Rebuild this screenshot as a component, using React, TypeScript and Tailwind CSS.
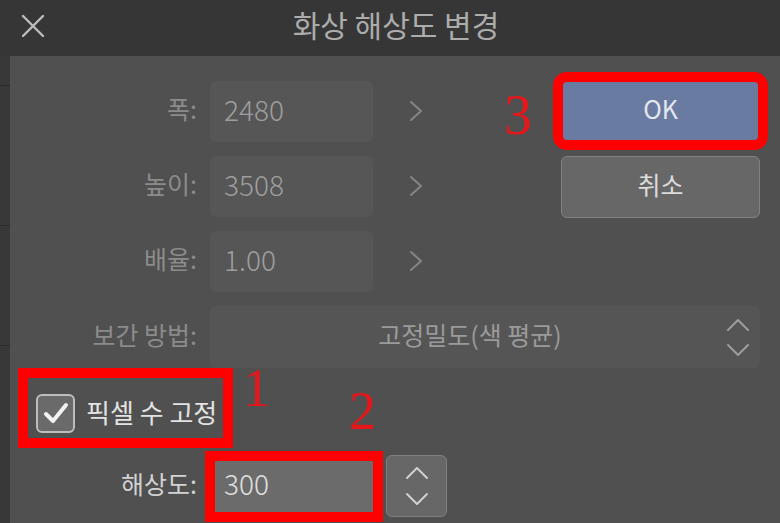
import React from 'react';

const font = { fontFamily: '"Noto Sans CJK KR", "Noto Sans", sans-serif' };
const serif = { fontFamily: '"Liberation Serif", serif' };

function Chevron({ dir, className }: { dir: 'right' | 'up' | 'down'; className?: string }) {
    const d = dir === 'right' ? 'M2 2 L12 11 L2 20' : dir === 'up' ? 'M2 12 L12 2 L22 12' : 'M2 2 L12 12 L22 2';
    const w = dir === 'right' ? 14 : 24;
    const h = dir === 'right' ? 22 : 14;
    return (
        <svg width={w} height={h} viewBox={`0 0 ${w} ${h}`} className={className}>
            <path d={d} fill="none" stroke="currentColor" strokeWidth="2" strokeLinecap="round" strokeLinejoin="round" />
        </svg>
    );
}

function Row({ label, value }: { label: string; value: string }) {
    return (
        <div className="flex items-center h-[61px]">
            <div className="w-[187px] text-right text-[25px] text-[#8b8b8b] pb-[5px]">{label}</div>
            <div className="ml-[13px] w-[163px] h-full rounded-md bg-[#565656] flex items-center pl-[14px] pb-[6px] text-[28px] font-light text-[#9e9e9e]">
                {value}
            </div>
            <div className="w-[86px] flex justify-center text-[#858585] pb-[2px]">
                <Chevron dir="right" />
            </div>
        </div>
    );
}

export default function App() {
    return (
        <div className="w-[780px] h-[523px] bg-[#505050] flex flex-col overflow-hidden relative" style={font}>
            {/* header */}
            <div className="h-[56px] bg-[#363636] flex items-center relative shrink-0">
                <svg width="24" height="24" viewBox="0 0 24 24" className="ml-[21px] mb-[4px] text-[#bdbdbd]">
                    <path d="M2 2 L22 22 M22 2 L2 22" stroke="currentColor" strokeWidth="2.4" strokeLinecap="round" />
                </svg>
                <div className="absolute left-0 right-0 text-center pl-[12px] pb-[8px] text-[30px] text-[#acacac] pointer-events-none">화상 해상도 변경</div>
            </div>

            <div className="flex flex-1">
                {/* left strip */}
                <div className="w-[10px] bg-[#383838] flex flex-col">
                    <div className="h-[30px] border-b border-[#2a2a2a]" />
                    <div className="h-[140px] border-b border-[#2c2c2c]" />
                    <div className="h-[120px] border-b border-[#2c2c2c]" />
                </div>

                {/* main panel */}
                <div className="flex-1 flex flex-col relative">
                    <div className="flex pt-[25px]">
                        <div className="flex flex-col gap-[14px]">
                            <Row label="폭:" value="2480" />
                            <Row label="높이:" value="3508" />
                            <Row label="배율:" value="1.00" />
                        </div>
                        <div className="ml-auto mr-[20px] flex flex-col gap-[14px]">
                            <button className="w-[199px] h-[62px] -mt-[1px] pb-[4px] rounded-md bg-[#6a7ba1] text-[25px] text-[#e3e7ef] outline-[10px] outline-[#ff0000] -outline-offset-2">
                                OK
                            </button>
                            <button className="w-[199px] h-[62px] pb-[4px] rounded-md bg-[#676767] border border-[#818181] text-[25px] text-[#dcdcdc]">
                                취소
                            </button>
                        </div>
                    </div>

                    {/* interpolation */}
                    <div className="flex items-center h-[62px] mt-[14px]">
                        <div className="w-[187px] text-right text-[25px] text-[#8b8b8b] pb-[5px]">보간 방법:</div>
                        <div className="ml-[13px] w-[550px] h-full rounded-md bg-[#555555] flex items-center relative">
                            <div className="flex-1 text-center text-[25px] text-[#9a9a9a] pl-[4px] pb-[5px]">고정밀도(색 평균)</div>
                            <div className="flex flex-col items-center gap-[11px] mr-[10px] text-[#9d9d9d]">
                                <Chevron dir="up" />
                                <Chevron dir="down" />
                            </div>
                        </div>
                    </div>

                    {/* pixel lock */}
                    <div className="flex items-center mt-[10px] ml-[18px] w-[195px] h-[60px] pt-[10px] pl-[8px] outline-[10px] outline-[#ff0000]">
                        <div className="w-[39px] h-[39px] rounded-md border-2 border-[#bdbdbd] bg-[#6a6a6a] flex items-center justify-center">
                            <svg width="28" height="24" viewBox="0 0 28 24">
                                <path d="M4 13 L11 20 L24 4" fill="none" stroke="#f2f2f2" strokeWidth="4" strokeLinecap="round" strokeLinejoin="round" />
                            </svg>
                        </div>
                        <span className="ml-[11px] pb-[4px] text-[26px] text-[#e2e2e2] whitespace-nowrap">픽셀 수 고정</span>
                    </div>

                    {/* resolution */}
                    <div className="flex items-center mt-[17px]">
                        <div className="w-[187px] text-right text-[25px] text-[#d2d2d2] pb-[5px]">해상도:</div>
                        <div className="ml-[18px] w-[158px] h-[51px] bg-[#6b6b6b] flex items-center pl-[9px] pb-[6px] text-[28px] font-light text-[#e0e0e0] outline-[10px] outline-[#ff0000]">
                            300
                        </div>
                        <div className="ml-[13px] w-[61px] h-[62px] rounded-md bg-[#676767] border border-[#808080] flex flex-col items-center justify-center gap-[12px] text-[#d0d0d0]">
                            <Chevron dir="up" />
                            <Chevron dir="down" />
                        </div>
                    </div>

                    {/* annotations */}
                    <span className="absolute left-[233px] top-[305px] text-[54px] leading-none text-[#e5171b]" style={serif}>1</span>
                    <span className="absolute left-[339px] top-[328px] text-[54px] leading-none text-[#e5171b]" style={serif}>2</span>
                    <span className="absolute left-[494px] top-[31px] text-[56px] leading-none text-[#e5171b]" style={serif}>3</span>
                </div>
            </div>
        </div>
    );
}
